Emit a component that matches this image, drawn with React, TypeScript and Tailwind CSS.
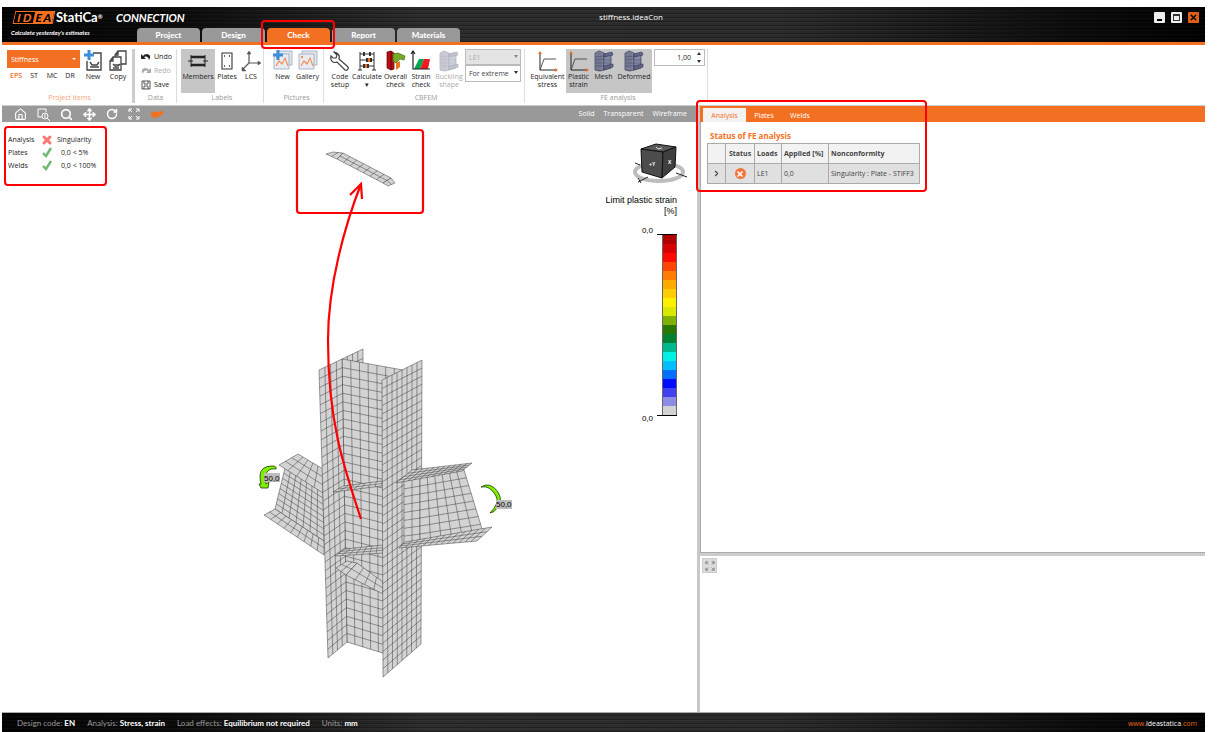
import React from 'react';
import { House, Move, RotateCw, Search, X, ChevronRight } from 'lucide-react';

type Pt = [number, number];

interface MeshProps {
  // corners in order: start, along u, opposite, along v
  quad: [Pt, Pt, Pt, Pt];
  nu: number;
  nv: number;
}

const lerp = (a: Pt, b: Pt, t: number): Pt => [a[0] + (b[0] - a[0]) * t, a[1] + (b[1] - a[1]) * t];
const fmt = (p: Pt) => `${p[0].toFixed(1)} ${p[1].toFixed(1)}`;

function Mesh({ quad, nu, nv }: MeshProps) {
  const [a, b, c, d] = quad;
  let lines = '';
  for (let i = 0; i <= nu; i++) {
    lines += `M${fmt(lerp(a, b, i / nu))}L${fmt(lerp(d, c, i / nu))}`;
  }
  for (let j = 0; j <= nv; j++) {
    lines += `M${fmt(lerp(a, d, j / nv))}L${fmt(lerp(b, c, j / nv))}`;
  }
  return (
    <g>
      <path d={`M${quad.map(fmt).join('L')}Z`} fill="#d3d3d3" />
      <path d={lines} fill="none" stroke="#3c3c3c" strokeWidth="0.5" />
    </g>
  );
}

const MODEL: MeshProps[] = [
  // left beam
  { quad: [[285, 468], [323, 492], [324, 541], [275, 509]], nu: 7, nv: 8 },
  { quad: [[279, 465], [298, 454], [323, 469], [323, 493]], nu: 3, nv: 5 },
  { quad: [[264, 515], [275, 509], [324, 541], [324, 555]], nu: 2, nv: 9 },
  // column
  { quad: [[342, 359], [363, 349], [363, 640], [347, 642]], nu: 4, nv: 31 },
  { quad: [[342, 359], [403, 370], [402, 659], [347, 642]], nu: 7, nv: 33 },
  { quad: [[319, 370], [342, 359], [347, 642], [328, 658]], nu: 4, nv: 33 },
  // stiffeners
  { quad: [[333, 492], [343, 486], [382, 481], [382, 486]], nu: 2, nv: 7 },
  { quad: [[335, 556], [345, 549], [383, 545], [383, 553]], nu: 3, nv: 7 },
  { quad: [[336, 568], [347, 561], [357, 563], [346, 575]], nu: 2, nv: 2 },
  { quad: [[346, 575], [357, 563], [383, 582], [383, 594]], nu: 2, nv: 4 },
  { quad: [[382, 380], [422, 360], [421, 644], [383, 677]], nu: 8, nv: 35 },
  // right beam
  { quad: [[404, 481], [420, 478], [420, 542], [404, 544]], nu: 2, nv: 8 },
  { quad: [[420, 478], [464, 470], [483, 532], [420, 542]], nu: 6, nv: 8 },
  { quad: [[396, 483], [412, 470], [472, 463], [462, 471]], nu: 4, nv: 11 },
  { quad: [[399, 548], [405, 542], [492, 527], [477, 541]], nu: 3, nv: 13 },
  // detached stiffener
  { quad: [[326, 154], [333, 152], [343, 153], [337, 159]], nu: 1, nv: 2 },
  { quad: [[337, 159], [343, 153], [391, 178], [383, 183]], nu: 2, nv: 7 },
  { quad: [[383, 183], [391, 178], [395, 183], [388, 186]], nu: 2, nv: 1 },
];

const LEGEND = [
  'bg-[#b00000]', 'bg-[#d80000]', 'bg-[#ff0a00]', 'bg-[#ff4600]', 'bg-[#ff7d00]',
  'bg-[#ffaa00]', 'bg-[#ffcd00]', 'bg-[#fff000]', 'bg-[#d8e800]', 'bg-[#80b000]',
  'bg-[#287800]', 'bg-[#008232]', 'bg-[#00b88c]', 'bg-[#00f0e6]', 'bg-[#00beff]',
  'bg-[#006eff]', 'bg-[#000aff]', 'bg-[#4040f0]', 'bg-[#8c8ce6]', 'bg-[#d2d2d2]',
];

const METAL =
  'bg-[repeating-linear-gradient(0deg,#00000040_0px,#00000040_1px,transparent_1px,transparent_3px,#ffffff08_3px,#ffffff08_4px),linear-gradient(90deg,#030303,#0b0b0b_15%,#2c2c2c_35%,#2a2a2a_65%,#0a0a0a_90%,#000)]';

function Marker({ className }: { className: string }) {
  return <div className={`pointer-events-none absolute z-10 rounded-[4px] border-2 border-[#fe0000] ${className}`} />;
}

function PictureIcon({ plus = false }: { plus?: boolean }) {
  return (
    <svg viewBox="0 0 22 22" className="size-[22px]">
      <path d="M5 1h15v14H5z" fill="#dfe5ee" stroke="#9ba7ba" strokeWidth="0.8" />
      <path d="M2 4h15v15H2z" fill="#e8ebf1" stroke="#9ba7ba" strokeWidth="0.8" />
      <path d="M4 16l3-5 3 3 3-6 3 8" fill="none" stroke="#f28a50" strokeWidth="1.1" />
      <circle cx="5" cy="7" r="1" fill="#f26f21" />
      {plus && <path d="M6 0v10M1 5h10" stroke="#3d8ed8" strokeWidth="3" />}
    </svg>
  );
}

function MeshIcon({ faded = false }: { faded?: boolean }) {
  return (
    <svg viewBox="0 0 22 22" className={`size-[22px] ${faded ? 'opacity-40' : ''}`}>
      <path d="M2 3l4-2 5 2v17l-4 1-5-1z" fill="#8589a5" stroke="#343850" strokeWidth="0.7" />
      <path d="M11 4l6-1 1 2v13l-7 2z" fill="#999eba" stroke="#343850" strokeWidth="0.7" />
      <path d="M11 4l8-2 1 3-9 2zM11 16l9-2v3l-9 3z" fill="#666b90" stroke="#343850" strokeWidth="0.6" />
      <path d="M4 3v17M6 2v19M8 3v17M2 7l9-1M2 10l9-1M2 13h9M2 16h9M13 5v13M15 5v13M17 6v11M11 10h7M11 13h7" stroke="#343850" strokeWidth="0.4" />
    </svg>
  );
}

function StressIcon() {
  return (
    <svg viewBox="0 0 22 22" className="size-[22px]" fill="none">
      <path d="M3 2v18h17" stroke="#222" strokeWidth="1" />
      <path d="M1 4l2-3 2 3zM18 18l3 2-3 2z" fill="#f26f21" />
      <path d="M3 20l4-11h12" stroke="#444" strokeWidth="0.9" />
    </svg>
  );
}

function UndoIcon({ className = '' }: { className?: string }) {
  return (
    <svg viewBox="0 0 10 8" className={`h-2 w-[10px] ${className}`}>
      <path d="M0 1v5h5L3 4q4-2 5 3 3-5-2-6-3 0-4 2z" fill="currentColor" />
    </svg>
  );
}

interface ToolButtonProps {
  label: string;
  second?: string;
  icon: React.ReactNode;
  className: string;
}

function ToolButton({ label, second, icon, className }: ToolButtonProps) {
  return (
    <button className={`flex h-11 flex-col items-center pt-px text-center leading-[8px] whitespace-nowrap ${className}`}>
      <span className="mb-px flex h-[22px] items-center">{icon}</span>
      <span>{label}</span>
      {second && <span>{second}</span>}
    </button>
  );
}

interface GroupProps {
  title: string;
  className: string;
  titleClass?: string;
  children: React.ReactNode;
}

function Group({ title, className, titleClass = 'text-[#999]', children }: GroupProps) {
  return (
    <section className={`flex shrink-0 flex-col justify-between ${className}`}>
      <div className="flex">{children}</div>
      <h2 className={`text-center leading-[10px] ${titleClass}`}>{title}</h2>
    </section>
  );
}

function Logo() {
  return (
    <div className="flex h-[13px] w-[40px] shrink-0 -skew-x-12 border border-[#f36f21] text-[11px] leading-[11px] font-black">
      <span className="flex w-[19px] justify-evenly bg-black text-[#f36f21]"><span>I</span><span>D</span></span>
      <span className="flex flex-1 justify-evenly bg-[#f36f21] text-black"><span>E</span><span>A</span></span>
    </div>
  );
}

function Header() {
  const tabs = ['Project', 'Design', 'Check', 'Report', 'Materials'];
  return (
    <header className={`relative flex h-[38px] border-b-[3px] border-[#f36f21] font-['Lato',sans-serif] text-white ${METAL}`}>
      <div className="w-[135px] shrink-0 pl-[9px] whitespace-nowrap">
        <div className="flex h-[20px] items-center pl-[3px]">
          <Logo />
          <span className="ml-[2px] w-[60px] shrink-0 text-[13px] font-bold">StatiCa<sup className="text-[6px]">®</sup></span>
          <span className="relative z-10 text-[11px] font-bold italic">CONNECTION</span>
        </div>
        <p className="text-[6px] leading-[12px] font-bold italic">Calculate yesterday's estimates</p>
      </div>
      <nav className="flex items-end gap-[2px]">
        {tabs.map((tab) => (
          <div key={tab} className="relative">
            <button
              className={`block h-[14px] w-[63px] rounded-t-[4px] text-[8px] leading-[14px] font-black ${tab === 'Check' ? 'bg-[#f36f21]' : 'bg-[#999]'}`}
            >
              {tab}
            </button>
            {tab === 'Check' && <Marker className="-top-2 -left-1.5 h-[29px] w-[74px]" />}
          </div>
        ))}
      </nav>
      <h1 className="absolute inset-x-0 top-[4px] ml-[55px] text-center font-['Open_Sans',sans-serif] text-[8px] leading-[12px]">stiffness.ideaCon</h1>
      <div className="absolute top-[5px] right-[6px] flex gap-[6px]">
        <button aria-label="Minimize" className="flex size-[11px] items-end justify-center rounded-[1px] bg-[#eee] pb-[2px]">
          <span className="h-[2px] w-[5px] bg-black" />
        </button>
        <button aria-label="Maximize" className="flex size-[11px] items-center justify-center rounded-[1px] bg-[#eee]">
          <span className="size-[7px] border border-t-2 border-[#333]" />
        </button>
        <button aria-label="Close" className="flex size-[11px] items-center justify-center rounded-[1px] bg-[#e0601a] text-black">
          <X size={9} strokeWidth={4} />
        </button>
      </div>
    </header>
  );
}

function Ribbon() {
  return (
    <div className="flex h-[61px] border-b border-[#ccc] pt-[4px] pb-[2px] text-[#222]">
      <Group title="Project items" titleClass="text-[#f7a578]" className="w-[130px] pl-[5px]">
        <div className="w-[73px] pt-px">
          <div className="relative">
            <select aria-label="Project item" className="block h-[18px] w-full appearance-none bg-[#f36f21] pl-1 text-white">
              <option>Stiffness</option>
            </select>
            <span className="absolute top-[8px] right-[4px] border-x-2 border-t-2 border-x-transparent border-t-white" />
          </div>
          <div className="flex pt-[3px] leading-[10px]">
            <button className="w-[18px] font-semibold text-[#f36f21]">EPS</button>
            <button className="w-[18px]">ST</button>
            <button className="w-[18px]">MC</button>
            <button className="w-[18px]">DR</button>
          </div>
        </div>
        <ToolButton
          label="New"
          className="w-[26px]"
          icon={
            <svg viewBox="0 0 22 22" className="size-[22px]" fill="none" stroke="#444" strokeWidth="1.4">
              <path d="M11 3h8v17H5v-9M8 12l2 3h5l2-3M8 17h9" />
              <path d="M7 0v10M2 5h10" stroke="#3d8ed8" strokeWidth="3" />
            </svg>
          }
        />
        <ToolButton
          label="Copy"
          className="w-6"
          icon={
            <svg viewBox="0 0 22 22" className="size-[22px]" fill="#fff" stroke="#444" strokeWidth="1.3">
              <path d="M11 1h8v13H8V5zM11 1v4H8" />
              <path d="M6 7h8v13H3v-9zM6 7v4H3M6 14l2 2h3l2-2M6 18h6" />
            </svg>
          }
        />
      </Group>
      <div className="w-[3px] bg-[#ccc]" />
      <Group title="Data" className="w-[42px] border-r border-[#ddd]">
        <div className="flex flex-col items-start gap-[4px] pt-[3px] pl-[6px] leading-[10px]">
          <button className="flex items-center gap-[3px]"><UndoIcon />Undo</button>
          <button className="flex items-center gap-[3px] text-[#aaa]"><UndoIcon className="-scale-x-100" />Redo</button>
          <button className="flex items-center gap-[3px]">
            <svg viewBox="0 0 10 10" className="size-[10px]" fill="none" stroke="#444" strokeWidth="0.9">
              <path d="M1 1h8v8H1zM3 1v3h4V1M3 9V6h4v3" />
            </svg>
            Save
          </button>
        </div>
      </Group>
      <Group title="Labels" className="w-[87px] border-r border-[#ddd] pl-1">
        <ToolButton
          label="Members"
          className="w-[34px] bg-[#c6c6c6]"
          icon={
            <svg viewBox="0 0 22 22" className="size-[22px]" fill="none" stroke="#222">
              <path d="M4 7h14M4 15h14" strokeWidth="2.4" />
              <path d="M4 5v12M18 5v12M1 11h5M16 11h5" strokeWidth="1" />
            </svg>
          }
        />
        <ToolButton
          label="Plates"
          className="w-6"
          icon={
            <svg viewBox="0 0 22 22" className="size-[22px]" fill="none" stroke="#333">
              <path d="M6 3h10v16H6z" strokeWidth="1.1" />
              <path d="M8 6h1M13 6h1M8 16h1M13 16h1" strokeWidth="1.4" />
            </svg>
          }
        />
        <ToolButton
          label="LCS"
          className="w-6"
          icon={
            <svg viewBox="0 0 22 22" className="size-[22px]" fill="none" stroke="#555" strokeWidth="1.2">
              <path d="M9 2v11h11M9 13l-7 7" />
              <path d="M7 4l2-3 2 3zM18 11l3 2-3 2zM2 17v4h4z" fill="#555" strokeWidth="0.5" />
            </svg>
          }
        />
      </Group>
      <Group title="Pictures" className="w-[60px] border-r border-[#ddd] pl-[6px]">
        <ToolButton label="New" className="w-[25px]" icon={<PictureIcon plus />} />
        <ToolButton label="Gallery" className="w-[25px]" icon={<PictureIcon />} />
      </Group>
      <Group title="CBFEM" className="w-[201px] border-r border-[#ddd] pl-1">
        <ToolButton
          label="Code"
          second="setup"
          className="w-6"
          icon={
            <svg viewBox="0 0 22 22" className="size-[22px]" fill="#fff" stroke="#444" strokeWidth="1.2">
              <path d="M5 2l3 3-1 3-3 0-2-2q-1 4 2 6 2 1 4 0l8 8q2 1 3-1 1-1-1-3l-8-7q1-3-1-5-2-2-4-2z" />
            </svg>
          }
        />
        <ToolButton
          label="Calculate"
          second="▾"
          className="w-[30px]"
          icon={
            <svg viewBox="0 0 22 22" className="size-[22px]" fill="none" stroke="#333">
              <path d="M4 2v18M18 2v18M2 20h4M16 20h4M4 4h14M4 10h14M4 16h14" />
              <path d="M8 2v4M14 2v4M11 8v4M15 8v4M8 14v4M12 14v4" strokeWidth="2" />
              <path d="M13 8v4M10 14v4" stroke="#f36f21" strokeWidth="2" />
            </svg>
          }
        />
        <ToolButton
          label="Overall"
          second="check"
          className="w-[27px]"
          icon={
            <svg viewBox="0 0 22 22" className="size-[22px]">
              <path d="M2 2l4-1 3 2v16l-3 1-4-2z" fill="#b90f15" stroke="#600" strokeWidth="0.7" />
              <path d="M6 1v19" stroke="#600" />
              <path d="M8 4l5-1 7 3-1 4-4-1-4 4-3-2z" fill="#75a928" stroke="#456b10" strokeWidth="0.7" />
              <path d="M11 13l4-2v6l-4 3z" fill="#e67920" />
            </svg>
          }
        />
        <ToolButton
          label="Strain"
          second="check"
          className="w-6"
          icon={
            <svg viewBox="0 0 22 22" className="size-[22px]">
              <path d="M4 19L9 9h5l-4 10z" fill="#00a651" />
              <path d="M10 19l4-10h6l-2 10z" fill="#ed1c24" />
              <path d="M3 1v18h17M1 4l2-3 2 3" fill="none" stroke="#222" strokeWidth="1.2" />
            </svg>
          }
        />
        <ToolButton label="Buckling" second="shape" className="w-[32px] text-[#aaa]" icon={<MeshIcon faded />} />
        <div className="w-[56px] text-[#444]">
          <div className="relative">
            <select aria-label="Load effect" disabled className="block h-[16px] w-full appearance-none border border-[#bbb] bg-[#e4e4e4] pl-[3px] text-[#aaa] opacity-100">
              <option>LE1</option>
            </select>
            <span className="absolute top-[6px] right-[3px] border-x-2 border-t-[3px] border-x-transparent border-t-[#888]" />
          </div>
          <div className="relative">
            <select aria-label="Evaluation" className="block h-[17px] w-full appearance-none border border-[#bbb] bg-white pl-[3px]">
              <option>For extreme</option>
            </select>
            <span className="absolute top-[6px] right-[3px] border-x-2 border-t-[3px] border-x-transparent border-t-[#333]" />
          </div>
        </div>
      </Group>
      <Group title="FE analysis" className="w-[183px] border-r border-[#ddd] pl-1">
        <ToolButton label="Equivalent" second="stress" className="w-[37px]" icon={<StressIcon />} />
        <div className="flex bg-[#c6c6c6]">
          <ToolButton label="Plastic" second="strain" className="w-[25px]" icon={<StressIcon />} />
          <ToolButton label="Mesh" className="w-[25px]" icon={<MeshIcon />} />
          <ToolButton label="Deformed" className="w-[36px]" icon={<MeshIcon />} />
        </div>
        <div className="relative ml-[2px] self-start">
          <input aria-label="Deformation scale" defaultValue="1,00" className="block h-[17px] w-[51px] border border-[#bbb] pr-[13px] text-right" />
          <span className="absolute top-[3px] right-[4px] border-x-2 border-b-[3px] border-x-transparent border-b-[#333]" />
          <span className="absolute right-[4px] bottom-[3px] border-x-2 border-t-[3px] border-x-transparent border-t-[#333]" />
        </div>
      </Group>
    </div>
  );
}

function ExpandIcon({ className }: { className: string }) {
  return (
    <svg viewBox="0 0 12 12" className={className} fill="none" stroke="currentColor" strokeWidth="1">
      <path d="M1 4V1h3M1 1l3 3M8 1h3v3M11 1L8 4M1 8v3h3M1 11l3-3M11 8v3H8M11 11L8 8" />
    </svg>
  );
}

function ViewToolbar() {
  return (
    <div className="flex h-4 items-center justify-between bg-[#999] pr-[10px] pl-[12px] text-white">
      <div className="flex items-center gap-[10px]">
        <button aria-label="Home"><House size={13} /></button>
        <button aria-label="Zoom window">
          <svg viewBox="0 0 13 13" className="size-[13px]" fill="none" stroke="currentColor">
            <path d="M5 9H1V1h8v3M10 10l3 3" />
            <circle cx="8" cy="8" r="3" />
            <path d="M8 6v4" />
          </svg>
        </button>
        <button aria-label="Zoom"><Search size={13} strokeWidth={3} /></button>
        <button aria-label="Pan"><Move size={13} strokeWidth={3} /></button>
        <button aria-label="Rotate"><RotateCw size={12} strokeWidth={3} /></button>
        <button aria-label="Fit view"><ExpandIcon className="size-3" /></button>
        <button aria-label="Solid view">
          <svg viewBox="0 0 14 9" className="block h-[9px] w-[14px]">
            <path d="M1 3Q3 1 7 2L12 1q3 2 0 4L8 7Q3 9 1 6z" fill="#f36f21" />
          </svg>
        </button>
      </div>
      <div className="flex gap-[9px] leading-[10px]">
        <button>Solid</button>
        <button>Transparent</button>
        <button>Wireframe</button>
      </div>
    </div>
  );
}

function Scene() {
  return (
    <svg viewBox="2 122 695 590" className="block w-full" fontFamily="Liberation Sans, sans-serif">
      {MODEL.map((part, i) => <Mesh key={i} {...part} />)}

      {/* bending moments */}
      <path d="M276 469q1-3-4-3-11 0-12 9 0 6 1 9l-2 0 2 4 7 0 1-6-3 2q-2-7 1-12 3-4 9-3z" fill="#7cf000" stroke="#1d3a00" strokeWidth="0.8" />
      <path d="M481 487q9-6 17 5 5 9 0 15-4 6-8 6 10-10 6-17-6-11-15-9z" fill="#7cf000" stroke="#1d3a00" strokeWidth="0.8" />
      <path d="M264 473h16v9h-16zM496 500h16v9h-16z" fill="#bdbdbd" />
      <text x="264" y="481" fontSize="8">50,0</text>
      <text x="496" y="507" fontSize="8">50,0</text>

      {/* view cube */}
      <ellipse cx="659" cy="172" rx="24" ry="9" fill="none" stroke="#bdbdbd" strokeWidth="4" />
      <path d="M648 177l-10 5M638 178l3 5M676 173l11 4M640 165l-5-2" stroke="#222" strokeWidth="1" />
      <path d="M641 149l15-5 20 3-13 5z" fill="#5a5a5a" stroke="#111" />
      <path d="M641 149l22 3-1 26-20-6z" fill="#4c4c4c" stroke="#111" />
      <path d="M663 152l13-5-1 20-13 11z" fill="#404040" stroke="#111" />
      <path d="M656 147l2 2 4-1" fill="none" stroke="#fff" strokeWidth="0.8" />
      <text x="649" y="166" fontSize="5" fontWeight="700" fill="#fff">+Y</text>
      <text x="668" y="164" fontSize="5" fontWeight="700" fill="#fff">X</text>

      {/* where the plate moved */}
      <g fill="none" stroke="#fe0000" strokeWidth="2.2">
        <rect x="297" y="130" width="126" height="83" rx="3" />
        <path d="M361 519C343 465 328 420 328 340C328 285 345 225 361 184" />
        <path d="M350 195L361 184L362 199" />
      </g>
    </svg>
  );
}

function Viewport() {
  const mark = (
    <svg viewBox="0 0 11 11" className="size-[11px]">
      <path d="M2 6l3 3 5-8" fill="none" stroke="#6fb873" strokeWidth="2.4" />
    </svg>
  );
  const rows = [
    { name: 'Analysis', icon: <X size={12} strokeWidth={6} className="text-[#f77]" />, value: 'Singularity', pad: '' },
    { name: 'Plates', icon: mark, value: '0,0 < 5%', pad: 'pl-1' },
    { name: 'Welds', icon: mark, value: '0,0 < 100%', pad: 'pl-1' },
  ];
  return (
    <div className="relative flex-1">
      <Scene />
      <dl className="absolute top-[11px] left-[6px] text-[#222]">
        {rows.map((row) => (
          <div key={row.name} className="flex h-[13px] items-center">
            <dt className="w-[33px]">{row.name}</dt>
            <dd className="flex items-center">
              <span className="w-4">{row.icon}</span>
              <span className={row.pad}>{row.value}</span>
            </dd>
          </div>
        ))}
      </dl>
      <Marker className="top-[4px] left-[2px] h-[60px] w-[103px]" />
      <div className="absolute top-[73px] right-[20px] text-right font-['Liberation_Sans',sans-serif] text-[9px] leading-[11px] text-black">
        <p>Limit plastic strain</p>
        <p>[%]</p>
        <div className="mt-[17px] flex justify-end gap-[4px]">
          <div className="-my-[7px] flex flex-col justify-between text-[8px] leading-[8px]">
            <span>0,0</span>
            <span>0,0</span>
          </div>
          <div className="border-y border-black pl-[5px]">
            <div className="w-[15px] border-x border-[#666]">
              {LEGEND.map((color) => <div key={color} className={`h-[9px] ${color}`} />)}
            </div>
          </div>
        </div>
      </div>
    </div>
  );
}

function ResultsPanel() {
  return (
    <aside className="relative flex w-[508px] shrink-0 flex-col border-l-[3px] border-[#c8c8c8]">
      <Marker className="-top-[6px] -left-[4px] h-[92px] w-[231px]" />
      <div className="flex h-4 items-end bg-[#f36f21] pl-[3px] text-white">
        <button className="h-[14px] w-[43px] bg-[#f2f2f2] text-[#f36f21]">Analysis</button>
        <button className="h-[14px] w-[36px]">Plates</button>
        <button className="h-[14px] w-[36px]">Welds</button>
      </div>
      <div className="flex-1 border-b border-l border-[#aaa] pt-[9px] pl-[6px]">
        <h2 className="mb-[2px] pl-[3px] text-[8px] leading-[10px] font-bold text-[#f36f21]">Status of FE analysis</h2>
        <table className="border-collapse text-left whitespace-nowrap text-[#444] [&_td]:border [&_td]:border-[#aaa] [&_th]:border [&_th]:border-[#aaa]">
          <thead>
            <tr className="h-[20px] bg-[#f2f2f2]">
              <th className="w-[18px]" aria-label="Expand" />
              <th className="w-[29px] text-center">Status</th>
              <th className="w-[27px] pl-[2px]">Loads</th>
              <th className="w-[47px] pl-[2px]">Applied [%]</th>
              <th className="w-[91px] pl-[2px]">Nonconformity</th>
            </tr>
          </thead>
          <tbody>
            <tr className="h-[20px] bg-[#e0e0e0]">
              <td>
                <button aria-label="Expand row" className="mx-auto block"><ChevronRight size={9} strokeWidth={3} /></button>
              </td>
              <td>
                <span className="mx-auto flex size-[11px] items-center justify-center rounded-full bg-[#f5743c] text-white">
                  <X size={8} strokeWidth={5} />
                </span>
              </td>
              <td className="pl-[2px]">LE1</td>
              <td className="pl-[2px]">0,0</td>
              <td className="pl-[2px]">Singularity : Plate - STIFF3</td>
            </tr>
          </tbody>
        </table>
      </div>
      <div className="h-[159px] border-t-[3px] border-[#ccc] p-[2px]">
        <button aria-label="Fit view" className="flex size-[15px] items-center justify-center border border-[#ccc] bg-[#dcdcdc] text-[#777]">
          <ExpandIcon className="size-[10px]" />
        </button>
      </div>
    </aside>
  );
}

function StatusBar() {
  const items = [
    ['Design code:', 'EN'],
    ['Analysis:', 'Stress, strain'],
    ['Load effects:', 'Equilibrium not required'],
    ['Units:', 'mm'],
  ];
  return (
    <footer className={`flex h-5 items-center justify-between border-t border-[#aaa] pt-[2px] pr-2 pl-[15px] text-[#999] ${METAL}`}>
      <div className="flex gap-3 font-['Lato',sans-serif] text-[8px]">
        {items.map(([name, value]) => (
          <span key={name}>{name} <b className="text-white">{value}</b></span>
        ))}
      </div>
      <a href="#" className="text-[#e8651c]">www.<span className="text-white">ideastatica</span>.com</a>
    </footer>
  );
}

export default function App() {
  return (
    <div className="flex min-h-screen flex-col bg-white pt-[7px] pr-3 pl-[2px] font-['Open_Sans',sans-serif] text-[7px] leading-[13px]">
      <Header />
      <Ribbon />
      <main className="flex flex-1">
        <div className="flex min-w-0 flex-1 flex-col">
          <ViewToolbar />
          <Viewport />
        </div>
        <ResultsPanel />
      </main>
      <StatusBar />
    </div>
  );
}
